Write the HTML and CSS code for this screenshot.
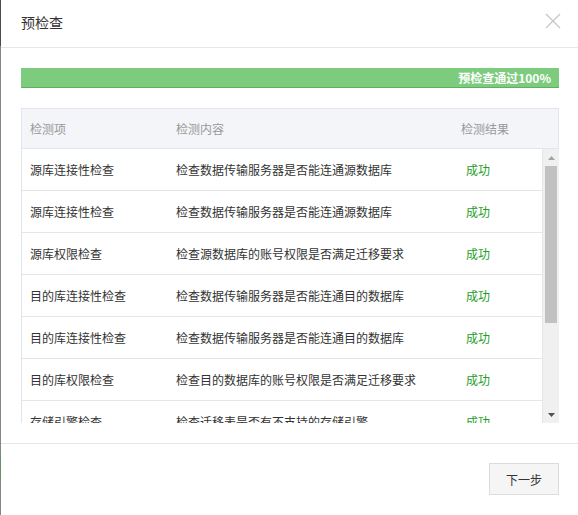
FILE: index.html
```html
<!DOCTYPE html>
<html lang="zh-CN">
<head>
<meta charset="utf-8">
<title>预检查</title>
<link rel="stylesheet" href="styles.css">
</head>
<body>
<div class="dialog">
  <div class="dialog-header">
    <span class="dialog-title">预检查</span>
    <span class="close" aria-label="关闭">
      <svg width="16" height="16" viewBox="0 0 16 16"><path d="M1 1 L15 15 M15 1 L1 15" stroke="#c8c8c8" stroke-width="1.4" fill="none"/></svg>
    </span>
  </div>
  <div class="dialog-body">
    <div class="progress"><span class="progress-text">预检查通过100%</span></div>
    <div class="table">
      <div class="thead">
        <div class="c1">检测项</div>
        <div class="c2">检测内容</div>
        <div class="c3">检测结果</div>
      </div>
      <div class="tbody">
        <div class="rows">
          <div class="row"><div class="c1">源库连接性检查</div><div class="c2">检查数据传输服务器是否能连通源数据库</div><div class="c3 ok">成功</div></div>
          <div class="row"><div class="c1">源库连接性检查</div><div class="c2">检查数据传输服务器是否能连通源数据库</div><div class="c3 ok">成功</div></div>
          <div class="row"><div class="c1">源库权限检查</div><div class="c2">检查源数据库的账号权限是否满足迁移要求</div><div class="c3 ok">成功</div></div>
          <div class="row"><div class="c1">目的库连接性检查</div><div class="c2">检查数据传输服务器是否能连通目的数据库</div><div class="c3 ok">成功</div></div>
          <div class="row"><div class="c1">目的库连接性检查</div><div class="c2">检查数据传输服务器是否能连通目的数据库</div><div class="c3 ok">成功</div></div>
          <div class="row"><div class="c1">目的库权限检查</div><div class="c2">检查目的数据库的账号权限是否满足迁移要求</div><div class="c3 ok">成功</div></div>
          <div class="row"><div class="c1">存储引擎检查</div><div class="c2">检查迁移表是否有不支持的存储引擎</div><div class="c3 ok">成功</div></div>
          <div class="row"><div class="c1">源库binlog检查</div><div class="c2">检查源数据库的binlog是否开启</div><div class="c3 ok">成功</div></div>
          <div class="row"><div class="c1">字符集检查</div><div class="c2">检查源库与目的库的字符集是否一致</div><div class="c3 ok">成功</div></div>
          <div class="row"><div class="c1">同名对象检查</div><div class="c2">检查目的库中是否存在同名对象</div><div class="c3 ok">成功</div></div>
        </div>
        <div class="scrollbar" aria-hidden="true">
          <div class="sb-btn"><svg width="7" height="4" viewBox="0 0 7 4"><path d="M3.5 0 L7 4 L0 4 Z" fill="#a3a3a3"/></svg></div>
          <div class="sb-track"><div class="sb-thumb"></div></div>
          <div class="sb-btn"><svg width="7" height="4" viewBox="0 0 7 4"><path d="M0 0 L7 0 L3.5 4 Z" fill="#505050"/></svg></div>
        </div>
      </div>
    </div>
  </div>
  <div class="dialog-footer">
    <button class="btn">下一步</button>
  </div>
</div>
</body>
</html>
```

FILE: styles.css
```css
html, body {
  margin: 0;
  padding: 0;
}
body {
  width: 578px;
  height: 515px;
  box-sizing: border-box;
  background: #fff;
  font-family: "Noto Sans CJK SC", "Liberation Sans", sans-serif;
  color: #333;
  border-style: solid;
  border-width: 0 0 0 1px;
  border-image: linear-gradient(to bottom, #4a4a4a 0, #4a4a4a 46px, #858585 46px, #858585 455px, #6a8f6a 455px, #6a8f6a 478px, #858585 478px) 0 0 0 1;
  overflow: hidden;
}
.dialog {
  display: flex;
  flex-direction: column;
}
.dialog-header {
  height: 47px;
  border-bottom: 1px solid #e6e6e6;
  display: flex;
  align-items: flex-start;
  justify-content: space-between;
  padding: 0 17px 0 20px;
}
.dialog-title {
  font-size: 14px;
  line-height: 44px;
  color: #333;
}
.close {
  margin-top: 13px;
  width: 16px;
  height: 16px;
  display: block;
}
.close svg { display: block; }
.dialog-body {
  padding: 20px 19px 0 20px;
}
.progress {
  height: 19px;
  background: #7dcc7e;
  border-bottom: 1px solid #5fae62;
  display: flex;
  justify-content: flex-end;
  align-items: center;
  padding-right: 8px;
}
.progress-text {
  color: #fff;
  font-size: 12px;
  font-weight: bold;
  line-height: 19px;
}
.table {
  margin-top: 20px;
  width: 538px;
}
.thead {
  height: 39px;
  background: #f3f5f8;
  border: 1px solid #e0e6ec;
  display: grid;
  grid-template-columns: 146px 285px 1fr;
  align-items: center;
  font-size: 12px;
  color: #999;
}
.thead > div, .row > div {
  padding-left: 8px;
  white-space: nowrap;
}
.tbody {
  height: 274px;
  display: flex;
  border-left: 1px solid #e0e6ec;
}
.rows {
  flex: 1;
  overflow: hidden;
}
.row {
  height: 41px;
  border-bottom: 1px solid #e0e6ec;
  display: grid;
  grid-template-columns: 146px 290px 1fr;
  align-items: center;
  font-size: 12px;
  color: #333;
}
.row .ok {
  color: #1f9e1f;
}
.scrollbar {
  width: 17px;
  flex: none;
  background: #f0f0f0;
  border-left: 1px solid #e6e6e6;
  box-sizing: border-box;
  display: flex;
  flex-direction: column;
}
.sb-btn {
  height: 17px;
  flex: none;
  display: flex;
  align-items: center;
  justify-content: center;
}
.sb-btn svg { display: block; }
.sb-track {
  flex: 1;
  padding: 0 2px 0 2px;
}
.sb-thumb {
  height: 157px;
  background: #c1c1c1;
}
.dialog-footer {
  margin-top: 20px;
  border-top: 1px solid #e6e6e6;
  padding: 19px 19px 0 20px;
  display: flex;
  justify-content: flex-end;
}
.btn {
  width: 70px;
  height: 32px;
  background: #f5f5f5;
  border: 1px solid #dcdcdc;
  font-family: "Noto Sans CJK SC", "Liberation Sans", sans-serif;
  font-size: 12px;
  color: #333;
  padding: 0;
  cursor: pointer;
}
```
